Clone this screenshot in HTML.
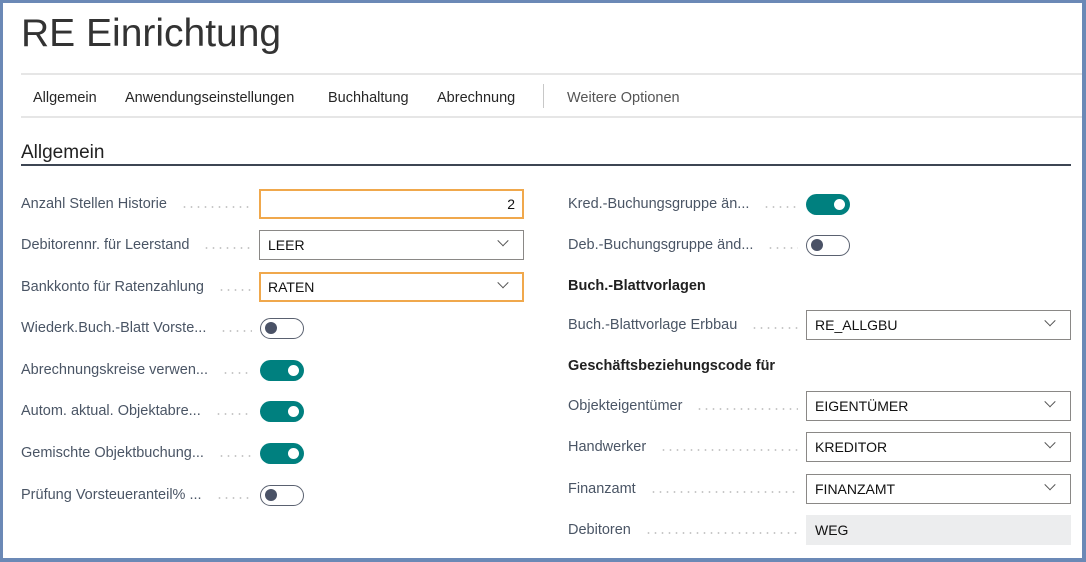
<!DOCTYPE html>
<html><head><meta charset="utf-8"><style>
*{box-sizing:border-box;margin:0;padding:0}
body{width:1086px;height:562px;background:#6b89b6;font-family:"Liberation Sans",sans-serif;overflow:hidden;position:relative}
.page{position:absolute;left:3px;top:3px;width:1079px;height:555px;background:#fff}
.abs{position:absolute}
.title{left:18px;top:9px;font-size:39px;color:#333;font-weight:normal}
.hl{height:2px;background:#e6e6e6;left:18px;right:0}
.nav{top:87px;font-size:14.5px;color:#262626}
.sec{left:18px;top:139px;font-size:19px;color:#212121}
.row{position:absolute;display:flex;align-items:center;height:30px}
.lbl{font-size:14.5px;color:#4a5565;white-space:nowrap}
.dots{flex:1;height:2px;margin:0 8px 0 14px;position:relative;top:3px;background:radial-gradient(circle,#c8c8c8 0.8px,transparent 1px) 0 0/7px 2px repeat-x}
.ctl{flex:none}
.inp{width:265px;height:30px;border:1px solid #8a8886;font-size:14px;color:#111;padding:0 8px;display:flex;align-items:center;justify-content:space-between}
.inp.or{border:2px solid #f0a84c;padding:0 7px}
.inp.ro{background:#ecedee;border-color:#ecedee}
.chev{width:8px;height:8px;border-right:1px solid #555;border-bottom:1px solid #555;transform:rotate(45deg) translate(-3px,-3px);margin-right:8px}
.tg{width:44px;height:21px;border-radius:11px;position:relative}
.tg.on{background:#00807f}
.tg.on::after{content:"";position:absolute;right:5px;top:5px;width:11px;height:11px;border-radius:50%;background:#fff}
.tg.off{border:1.5px solid #5a6170;background:#fff}
.tg.off::after{content:"";position:absolute;left:3.5px;top:3px;width:12px;height:12px;border-radius:50%;background:#4a5266}
.grp{font-size:14.5px;font-weight:bold;color:#212121}
</style></head><body><div class="page">
<div class="abs title">RE Einrichtung</div>
<div class="abs hl" style="top:70px"></div>
<div class="abs nav" style="left:30px">Allgemein</div>
<div class="abs nav" style="left:122px">Anwendungseinstellungen</div>
<div class="abs nav" style="left:325px">Buchhaltung</div>
<div class="abs nav" style="left:434px">Abrechnung</div>
<div class="abs" style="left:540px;top:81px;width:1px;height:24px;background:#c8c8c8"></div>
<div class="abs nav" style="left:564px;color:#555">Weitere Optionen</div>
<div class="abs hl" style="top:113px"></div>
<div class="abs sec">Allgemein</div>
<div class="abs" style="left:18px;top:161px;width:1050px;height:2px;background:#3d4653"></div>

<div class="row" style="left:18px;top:186px;width:503px"><span class="lbl">Anzahl Stellen Historie</span><span class="dots"></span><div class="ctl inp or" style="justify-content:flex-end">2</div></div>
<div class="row" style="left:18px;top:227px;width:503px"><span class="lbl">Debitorennr. für Leerstand</span><span class="dots"></span><div class="ctl inp">LEER<span class="chev"></span></div></div>
<div class="row" style="left:18px;top:269px;width:503px"><span class="lbl">Bankkonto für Ratenzahlung</span><span class="dots"></span><div class="ctl inp or">RATEN<span class="chev"></span></div></div>
<div class="row" style="left:18px;top:310px;width:283px"><span class="lbl">Wiederk.Buch.-Blatt Vorste...</span><span class="dots"></span><div class="ctl tg off"></div></div>
<div class="row" style="left:18px;top:352px;width:283px"><span class="lbl">Abrechnungskreise verwen...</span><span class="dots"></span><div class="ctl tg on"></div></div>
<div class="row" style="left:18px;top:393px;width:283px"><span class="lbl">Autom. aktual. Objektabre...</span><span class="dots"></span><div class="ctl tg on"></div></div>
<div class="row" style="left:18px;top:435px;width:283px"><span class="lbl">Gemischte Objektbuchung...</span><span class="dots"></span><div class="ctl tg on"></div></div>
<div class="row" style="left:18px;top:477px;width:283px"><span class="lbl">Prüfung Vorsteueranteil% ...</span><span class="dots"></span><div class="ctl tg off"></div></div>

<div class="row" style="left:565px;top:186px;width:282px"><span class="lbl">Kred.-Buchungsgruppe än...</span><span class="dots"></span><div class="ctl tg on"></div></div>
<div class="row" style="left:565px;top:227px;width:282px"><span class="lbl">Deb.-Buchungsgruppe änd...</span><span class="dots"></span><div class="ctl tg off"></div></div>
<div class="abs grp" style="left:565px;top:275px">Buch.-Blattvorlagen</div>
<div class="row" style="left:565px;top:307px;width:503px"><span class="lbl">Buch.-Blattvorlage Erbbau</span><span class="dots"></span><div class="ctl inp">RE_ALLGBU<span class="chev"></span></div></div>
<div class="abs grp" style="left:565px;top:355px">Geschäftsbeziehungscode für</div>
<div class="row" style="left:565px;top:388px;width:503px"><span class="lbl">Objekteigentümer</span><span class="dots"></span><div class="ctl inp">EIGENTÜMER<span class="chev"></span></div></div>
<div class="row" style="left:565px;top:429px;width:503px"><span class="lbl">Handwerker</span><span class="dots"></span><div class="ctl inp">KREDITOR<span class="chev"></span></div></div>
<div class="row" style="left:565px;top:471px;width:503px"><span class="lbl">Finanzamt</span><span class="dots"></span><div class="ctl inp">FINANZAMT<span class="chev"></span></div></div>
<div class="row" style="left:565px;top:512px;width:503px"><span class="lbl">Debitoren</span><span class="dots"></span><div class="ctl inp ro">WEG</div></div>
</div></body></html>
